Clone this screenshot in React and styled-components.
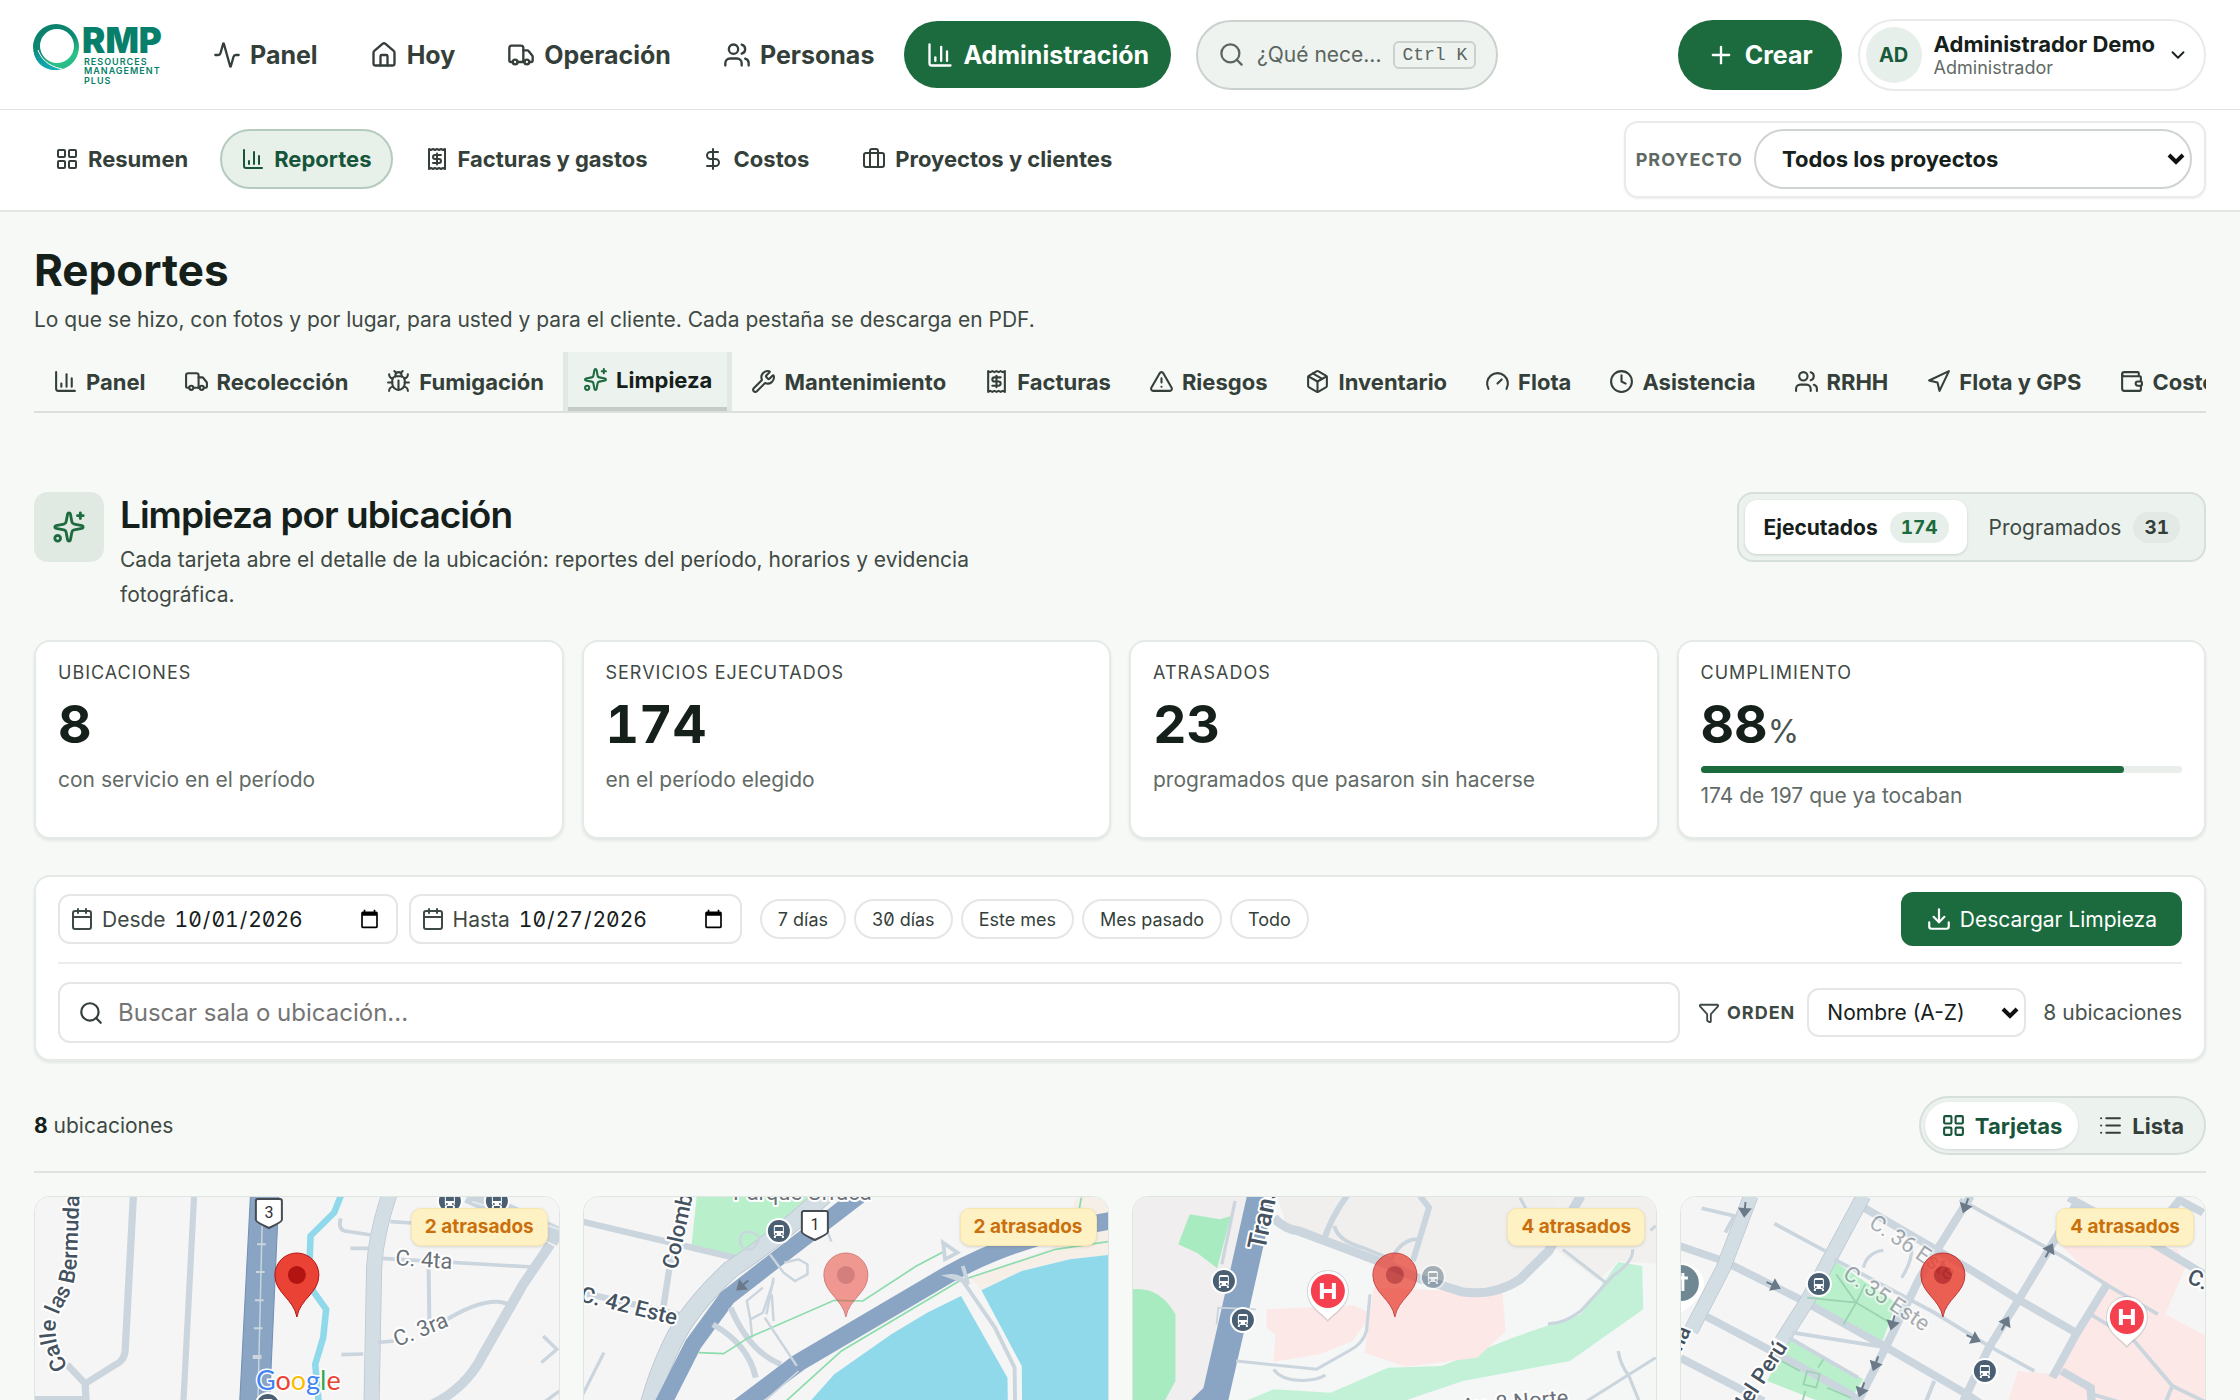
import React, { useState } from 'react';
import styled, { createGlobalStyle, css } from 'styled-components';
import {
  Activity, House, Truck, Users, ChartColumn, Search, Plus, ChevronDown, LayoutGrid,
  Receipt, DollarSign, Briefcase, Bug, Sparkles, Wrench, TriangleAlert, Package, Gauge,
  Clock, Navigation, Wallet, Calendar, Download, Funnel, List,
} from 'lucide-react';

const mainNav = [
  { label: 'Panel', icon: Activity },
  { label: 'Hoy', icon: House },
  { label: 'Operación', icon: Truck },
  { label: 'Personas', icon: Users },
  { label: 'Administración', icon: ChartColumn },
];

const subNav = [
  { label: 'Resumen', icon: LayoutGrid },
  { label: 'Reportes', icon: ChartColumn },
  { label: 'Facturas y gastos', icon: Receipt },
  { label: 'Costos', icon: DollarSign },
  { label: 'Proyectos y clientes', icon: Briefcase },
];

const reportTabs = [
  { label: 'Panel', icon: ChartColumn },
  { label: 'Recolección', icon: Truck },
  { label: 'Fumigación', icon: Bug },
  { label: 'Limpieza', icon: Sparkles },
  { label: 'Mantenimiento', icon: Wrench },
  { label: 'Facturas', icon: Receipt },
  { label: 'Riesgos', icon: TriangleAlert },
  { label: 'Inventario', icon: Package },
  { label: 'Flota', icon: Gauge },
  { label: 'Asistencia', icon: Clock },
  { label: 'RRHH', icon: Users },
  { label: 'Flota y GPS', icon: Navigation },
  { label: 'Costos', icon: Wallet },
];

const ranges = ['7 días', '30 días', 'Este mes', 'Mes pasado', 'Todo'];

/* ---------- logo ---------- */

const Logo = () => (
  <svg width="136" height="64" viewBox="0 0 136 64" role="img" aria-label="RMP Resources Management Plus">
    <defs>
      <linearGradient id="ring" x1="0.2" y1="0" x2="0.7" y2="1">
        <stop offset="0" stopColor="#0b7f6c" />
        <stop offset="0.5" stopColor="#0d8a72" />
        <stop offset="0.8" stopColor="#2cc287" />
        <stop offset="1" stopColor="#25b987" />
      </linearGradient>
      <linearGradient id="ringLow" x1="0" y1="0" x2="1" y2="1">
        <stop offset="0" stopColor="#0f8f8f" />
        <stop offset="1" stopColor="#14b4be" />
      </linearGradient>
    </defs>
    <path fill="url(#ring)" fillRule="evenodd" d="M24 1a23 23 0 1 1 0 46a23 23 0 1 1 0-46zM25 6a17 17 0 1 0 0 34a17 17 0 1 0 0-34z" />
    <path fill="url(#ringLow)" d="M5 28C8 35 15 43 29 46C17 50 4 42 2 30z" />
    <path d="M6 27C9 35 15 43 30 46" fill="none" stroke="#fff" strokeWidth="1" />
    <g fontFamily="Inter, sans-serif" fill="#087f6b">
      <text x="50" y="30" fontSize="35" fontWeight="900">RMP</text>
      <g fontSize="9" fontWeight="600" letterSpacing="1">
        <text x="52" y="42">RESOURCES</text>
        <text x="52" y="51">MANAGEMENT</text>
        <text x="52" y="61">PLUS</text>
      </g>
    </g>
  </svg>
);

/* ---------- map pieces ---------- */

const ROAD = '#cbd5de';
const BAND = '#d3dde4';
const HIGHWAY = '#8aa4c3';
const WATER = '#8fd9eb';
const PARK = '#b9f0cb';
const CARE = '#fce8e6';

const BusStop = ({ x, y, opacity = 1 }) => (
  <g transform={`translate(${x} ${y})`} opacity={opacity}>
    <circle r="13" fill="#fff" />
    <circle r="11" fill="#4a6072" />
    <rect x="-5" y="-6" width="10" height="11" rx="2" fill="#fff" />
    <rect x="-4" y="-4" width="8" height="4" fill="#4a6072" />
    <path d="M-4 5v2M4 5v2" stroke="#fff" strokeWidth="2" />
    <circle cx="-3" cy="3" r="1" fill="#4a6072" />
    <circle cx="3" cy="3" r="1" fill="#4a6072" />
  </g>
);

const Hospital = ({ x, y }) => (
  <g transform={`translate(${x} ${y})`}>
    <path d="M0 31C-4 25-21 17-21 0a21 21 0 0 1 42 0C21 17 4 25 0 31z" fill="#9aa5ad" opacity="0.4" />
    <path d="M0 29C-4 23-20 16-20 0a20 20 0 0 1 40 0C20 16 4 23 0 29z" fill="#fff" />
    <circle r="17" fill="#f5414f" />
    <path d="M-6-8v16M6-8v16M-6 0h12" stroke="#fff" strokeWidth="4" />
  </g>
);

const Pin = ({ opacity = 1 }) => (
  <g transform="translate(263 78)" opacity={opacity}>
    <path
      d="M0-22a22 22 0 0 1 22 22C22 18 3 24 0 42C-3 24-22 18-22 0A22 22 0 0 1 0-22z"
      fill="#ea4335" stroke="#b31412" strokeWidth="1"
    />
    <circle r="9" fill="#b31412" />
  </g>
);

const Shield = ({ x, y, children }) => (
  <g transform={`translate(${x} ${y})`}>
    <path d="M-13-12Q-13-14-11-14H11Q13-14 13-12V7Q13 9 0 15Q-13 9-13 7z" fill="#fff" stroke="#454b50" strokeWidth="2" />
    <text textAnchor="middle" y="5" fontSize="16" fontFamily="Roboto, sans-serif" fill="#2c3135">{children}</text>
  </g>
);

const Arrow = ({ x, y, turn }) => (
  <path d="M-7 0H4M0-5L7 0L0 5z" transform={`translate(${x} ${y}) rotate(${turn})`} fill="#6b7a88" stroke="#6b7a88" strokeWidth="2" />
);

const MapBermudas = () => (
  <MapSvg viewBox="0 0 526 300" preserveAspectRatio="xMidYMin slice" aria-hidden="true">
    <rect width="526" height="300" fill="#f5f5f5" />
    <g transform="scale(0.3635 0.3333) translate(-94 -48)" fill="none" stroke={ROAD}>
      <path d="M368 40L345 510Q342 540 320 550L235 608L185 550M235 605L242 760M95 655H240" strokeWidth="20" />
      <path d="M535 40L505 670L500 950" strokeWidth="17" />
      <path d="M690 40H768L742 670L730 950H648L660 670z" fill={HIGHWAY} stroke="#7391b8" strokeWidth="3" />
      <path d="M722 130L704 950" strokeWidth="4" />
      <path d="M708 190h24M705 273h24M702 358h24M699 442h24" strokeWidth="6" />
      <path d="M696 528h24" strokeWidth="12" />
      <path d="M940 40L920 95L855 165L853 230L862 330L898 385L890 470L868 550L878 670L890 950" stroke={WATER} strokeWidth="18" />
      <path d="M1072 40Q1035 160 1030 260L1018 950" stroke="#bac6cf" strokeWidth="44" />
      <path d="M1072 40Q1035 160 1030 260L1018 950" stroke={BAND} strokeWidth="40" />
      <path d="M938 112Q930 145 950 150L1022 162M965 202H1015M1075 122L1135 126M1050 232L1465 258M1180 260L1182 430M1040 484L1085 480M940 521L1000 519" strokeWidth="11" />
      <path d="M1220 422Q1310 360 1370 362Q1395 365 1402 372" strokeWidth="12" />
      <path d="M1290 40L1545 170" strokeWidth="54" />
      <path d="M1300 62L1540 145" stroke="#e3e8ec" strokeWidth="6" />
      <path d="M1515 190L1440 310L1330 520Q1280 630 1170 680" strokeWidth="28" />
      <path d="M1495 465L1533 505L1490 545M1500 662L1540 630" strokeWidth="10" />
    </g>
    <path id="bermudas" d="M34 170C20 146 18 130 27 112C37 96 42 84 43 62L47-40" fill="none" />
    <MapText>
      <textPath href="#bermudas">Calle las Bermudas</textPath>
    </MapText>
    <MapText soft x="361" y="68" transform="rotate(4 361 68)">C. 4ta</MapText>
    <MapText soft x="363" y="150" transform="rotate(-22 363 150)">C. 3ra</MapText>
    <BusStop x={416} y={4} />
    <BusStop x={463} y={4} />
    <Shield x={235} y={16}>3</Shield>
    <Pin />
    <BusStop x={234} y={208} />
    <GoogleMark x="222" y="193">
      <tspan fill="#4285f4">G</tspan>
      <tspan fill="#ea4335">o</tspan>
      <tspan fill="#fbbc05">o</tspan>
      <tspan fill="#4285f4">g</tspan>
      <tspan fill="#34a853">l</tspan>
      <tspan fill="#ea4335">e</tspan>
    </GoogleMark>
  </MapSvg>
);

const MapCosta = () => (
  <MapSvg viewBox="0 0 526 300" preserveAspectRatio="xMidYMin slice" aria-hidden="true">
    <rect width="526" height="300" fill="#f5f5f5" />
    <g transform="scale(0.3571 0.3333) translate(-36 -48)" fill="none" stroke={ROAD}>
      <path d="M355 45H670L480 225L340 195z" fill={PARK} stroke="none" />
      <path d="M1120 290L1360 195L1420 45H1520V220L1400 235L1265 270L1152 328z" fill="#f5efe8" stroke="none" />
      <path d="M665 670L740 580L900 460L1000 395L1095 345L1225 590L1230 950H500z" fill={WATER} stroke="none" />
      <path d="M1152 328L1265 270L1400 235L1520 220V950H1268L1265 555z" fill={WATER} stroke="none" />
      <path d="M36 122L480 235M36 335L320 405" strokeWidth="19" />
      <path d="M290 180L262 375" strokeWidth="18" />
      <path d="M95 515L36 640" strokeWidth="9" />
      <path d="M715 40Q560 190 450 265Q330 385 285 490Q240 590 215 700" stroke="#b5c1cb" strokeWidth="54" />
      <path d="M715 40Q560 190 450 265Q330 385 285 490Q240 590 215 700" stroke={BAND} strokeWidth="50" />
      <path d="M815 40L590 225L440 350L345 490L255 680" stroke={HIGHWAY} strokeWidth="48" />
      <path d="M400 430Q500 490 520 590M450 380Q500 510 590 550" strokeWidth="17" />
      <path d="M560 220L598 275L630 300L665 280L665 250L640 235L600 245M570 300L540 395L505 415L495 360L540 320M505 415L510 470M565 340L570 420M480 160Q510 140 530 170Q520 210 490 205Q470 190 480 160M720 150L732 182" strokeWidth="7" />
      <path d="M360 515L430 518L500 470L740 358L820 360L970 255L1050 210M600 665L760 510L1090 300L1360 205L1520 180M1432 50L1425 90" stroke="#8ddcae" strokeWidth="5" />
      <path d="M460 690L640 545L1060 280Q1250 165 1520 118" stroke={HIGHWAY} strokeWidth="52" />
      <path d="M545 410L635 555M570 290L550 400" strokeWidth="7" />
      <path d="M1045 185L1085 215L1050 235zM1100 255L1115 310Q1090 280 1060 285L1100 300L1190 440L1245 560L1250 950" strokeWidth="11" />
      <path d="M540 665L640 570" strokeWidth="5" />
    </g>
    <MapText x="94" y="73" transform="rotate(-78 94 73)">Colombia</MapText>
    <MapText x="-4" y="104" transform="rotate(14 -4 104)">C. 42 Este</MapText>
    <MapText soft x="150" y="3">Parque Urracá</MapText>
    <Arrow x={160} y={88} turn={140} />
    <BusStop x={196} y={34} />
    <Shield x={232} y={28}>1</Shield>
    <Pin opacity={0.52} />
  </MapSvg>
);

const MapTransistmica = () => (
  <MapSvg viewBox="0 0 526 300" preserveAspectRatio="xMidYMin slice" aria-hidden="true">
    <rect width="526" height="300" fill="#f5f6f6" />
    <g transform="scale(0.3571 0.3333) translate(-33 -48)" fill="none" stroke={ROAD}>
      <path d="M33 45H360L270 520L215 670L130 950H33z" fill="#f0eeee" stroke="none" />
      <path d="M440 45H1300L1200 205L1110 300L1000 335L820 280L600 190L470 150z" fill="#f0efee" stroke="none" />
      <path d="M1220 45H1520V250L1395 240L1340 300L1220 205z" fill="#f1f0ef" stroke="none" />
      <path d="M195 100L280 115L310 105L272 262L215 215L163 190zM33 325Q110 315 155 400V600L120 670L100 950H33z" fill="#a9ebc0" stroke="none" />
      <path d="M340 665L430 625L590 635L750 560L900 555L1100 470L1290 400L1395 243L1462 255L1465 385L1260 540L960 600L740 680L500 950z" fill="#c3f1d7" stroke="none" />
      <path d="M410 385L655 373L705 400L650 480L560 520L430 542L435 460L410 440zM710 320L1070 335L1080 450L1000 530L800 557L685 515z" fill={CARE} stroke="none" />
      <path d="M395 40L328 360L268 640L210 700" stroke={HIGHWAY} strokeWidth="76" />
      <path d="M322 60L285 250" strokeWidth="9" />
      <path d="M430 110Q460 145 500 150L600 190L760 255L830 290L960 333Q1050 345 1120 295L1200 210L1290 45" strokeWidth="27" />
      <path d="M635 45Q590 110 570 180M840 45L865 80L820 240" strokeWidth="17" />
      <path d="M600 135Q610 180 680 200L760 235Q790 170 840 175" strokeWidth="11" />
      <path d="M700 340L690 450Q680 490 640 510L550 565L325 540M430 565Q450 595 500 598Q550 600 575 582M1240 205L1360 305M1435 205Q1440 240 1380 285L1290 390Q1240 430 1198 428M1120 50L1140 90M1300 665L1500 530M1395 510Q1400 550 1425 585L1455 665M1485 148L1500 135" strokeWidth="9" />
      <path d="M270 430L275 380L380 385" strokeWidth="5" />
    </g>
    <MapText x="133" y="54" big transform="rotate(-78 133 54)">Transístmica</MapText>
    <MapText soft x="330" y="217" transform="rotate(-5 330 217)">Av. 8 Norte</MapText>
    <BusStop x={92} y={84} />
    <BusStop x={111} y={123} />
    <BusStop x={301} y={80} opacity={0.45} />
    <Hospital x={196} y={94} />
    <Pin opacity={0.74} />
  </MapSvg>
);

const MapPeru = () => (
  <MapSvg viewBox="0 0 526 300" preserveAspectRatio="xMidYMin slice" aria-hidden="true">
    <rect width="526" height="300" fill="#f5f5f5" />
    <g transform="scale(0.3635 0.3333) translate(-30 -48)" fill="none" stroke={ROAD}>
      <path d="M1080 195L1400 205L1420 260L1365 400L1540 500V950H850L960 570L1060 580L1200 320z" fill={CARE} stroke="none" />
      <path d="M455 240L625 365L585 490L380 365zM330 470L535 595L480 690L270 600z" fill={PARK} stroke="none" />
      <path d="M30 195L150 240L370 360L600 500L820 640L900 700M520 70L820 260L960 355L1120 455M100 405L300 520L500 640L560 700M30 530L260 660M1080 570L1160 620L1165 700M1100 50L1320 180L1480 285M1400 55L1470 95" strokeWidth="23" />
      <path d="M225 45L150 260L60 450M535 45L380 360L310 480" stroke="#bac6cf" strokeWidth="42" />
      <path d="M225 45L150 260L60 450M535 45L380 360L310 480" stroke={BAND} strokeWidth="38" />
      <path d="M830 45L690 290L600 490L530 640L500 700M1120 70L960 360L880 500L810 660M1205 310L1120 460L1055 590M1410 50L1380 90" strokeWidth="23" />
      <path d="M455 235L730 395L880 495L1005 570M800 55L1080 225L1210 315L1345 400M340 455L600 500M1160 400L1280 480L1385 615L1480 665M1385 615L1360 680M290 128L430 210M90 82L180 105L155 155M730 600L700 680M330 470L520 590M1165 640L1260 670" strokeWidth="11" />
      <path d="M535 260Q545 215 590 208M668 195Q670 240 640 290" strokeWidth="9" />
      <path d="M380 350L515 365L600 420M460 280L515 365L540 310M515 365L480 430M310 540L360 570M425 535L410 560M380 570L415 580L405 620L370 610zM435 620L500 650M375 630L365 670" stroke="#9bd3b2" strokeWidth="5" />
    </g>
    <Arrow x={65} y={12} turn={95} />
    <Arrow x={286} y={8} turn={110} />
    <Arrow x={93} y={88} turn={25} />
    <Arrow x={213} y={125} turn={105} />
    <Arrow x={196} y={166} turn={110} />
    <Arrow x={182} y={192} turn={110} />
    <Arrow x={293} y={141} turn={25} />
    <Arrow x={325} y={127} turn={-62} />
    <Arrow x={369} y={54} turn={-62} />
    <MapText soft faint x="188" y="29" transform="rotate(34 188 29)">C. 36 Este</MapText>
    <MapText soft faint x="162" y="80" transform="rotate(34 162 80)">C. 35 Este</MapText>
    <MapText x="64" y="218" transform="rotate(-57 64 218)">del Perú</MapText>
    <MapText x="-38" y="239" transform="rotate(-65 -38 239)">Ecuatoriana</MapText>
    <MapText x="506" y="85" transform="rotate(24 506 85)">C. 37</MapText>
    <path d="M-2 121C2 112 24 104 24 86C24 74 12 66-2 66z" fill="#fff" />
    <circle cx="1" cy="86" r="18" fill="#6f8893" />
    <path d="M3 76v18M-2 81h10" stroke="#fff" strokeWidth="3" />
    <BusStop x={139} y={87} />
    <BusStop x={305} y={174} />
    <Hospital x={447} y={120} />
    <Pin opacity={0.84} />
  </MapSvg>
);

const locations = [
  { late: 2, map: MapBermudas },
  { late: 2, map: MapCosta },
  { late: 4, map: MapTransistmica },
  { late: 4, map: MapPeru },
];

/* ---------- page ---------- */

const SelectArrow = () => (
  <svg width="18" height="12" viewBox="0 0 18 12" aria-hidden="true">
    <path d="M2 2l7 7 7-7" fill="none" stroke="#111" strokeWidth="4" />
  </svg>
);

const TopBar = () => (
  <Header>
    <LogoLink href="#"><Logo /></LogoLink>
    <MainNav aria-label="Principal">
      {mainNav.map(({ label, icon: Icon }) => (
        <MainLink key={label} href="#" $active={label === 'Administración'}>
          <Icon size={28} strokeWidth={2} />
          {label}
        </MainLink>
      ))}
    </MainNav>
    <QuickSearch type="button">
      <Search size={27} />
      <span>¿Qué nece...</span>
      <kbd>Ctrl K</kbd>
    </QuickSearch>
    <Spacer />
    <CreateButton type="button"><Plus size={28} />Crear</CreateButton>
    <Profile type="button">
      <Avatar>AD</Avatar>
      <ProfileText>
        <strong>Administrador Demo</strong>
        <small>Administrador</small>
      </ProfileText>
      <ChevronDown size={22} />
    </Profile>
  </Header>
);

const SubBar = () => (
  <SubHeader>
    <SubNav aria-label="Administración">
      {subNav.map(({ label, icon: Icon }) => (
        <SubLink key={label} href="#" $active={label === 'Reportes'}>
          <Icon size={24} />
          {label}
        </SubLink>
      ))}
    </SubNav>
    <ProjectBox>
      <label htmlFor="project">PROYECTO</label>
      <SelectWrap>
        <ProjectSelect id="project">
          <option>Todos los proyectos</option>
        </ProjectSelect>
        <SelectArrow />
      </SelectWrap>
    </ProjectBox>
  </SubHeader>
);

export default function App() {
  const [tab, setTab] = useState('Limpieza');
  const [mode, setMode] = useState('done');
  const [view, setView] = useState('cards');
  const [from, setFrom] = useState('2026-10-01');
  const [to, setTo] = useState('2026-10-27');

  return (
    <Shell>
      <GlobalStyle />
      <TopBar />
      <SubBar />
      <Main>
        <PageTitle>Reportes</PageTitle>
        <PageLead>
          Lo que se hizo, con fotos y por lugar, para usted y para el cliente. Cada pestaña se descarga en PDF.
        </PageLead>
        <Tabs role="tablist">
          {reportTabs.map(({ label, icon: Icon }, i) => (
            <Tab
              key={label + i}
              type="button"
              role="tab"
              aria-selected={tab === label}
              $active={tab === label}
              onClick={() => setTab(label)}
            >
              <Icon size={25} />
              {label}
            </Tab>
          ))}
        </Tabs>

        <SectionHead>
          <SectionIcon><Sparkles size={34} /></SectionIcon>
          <SectionText>
            <h2>Limpieza por ubicación</h2>
            <p>Cada tarjeta abre el detalle de la ubicación: reportes del período, horarios y evidencia fotográfica.</p>
          </SectionText>
          <Segment>
            <SegmentButton type="button" $active={mode === 'done'} onClick={() => setMode('done')}>
              Ejecutados<Count $active={mode === 'done'}>174</Count>
            </SegmentButton>
            <SegmentButton type="button" $active={mode === 'planned'} onClick={() => setMode('planned')}>
              Programados<Count $active={mode === 'planned'}>31</Count>
            </SegmentButton>
          </Segment>
        </SectionHead>

        <Stats>
          <Stat>
            <StatLabel>UBICACIONES</StatLabel>
            <StatValue>8</StatValue>
            <StatNote>con servicio en el período</StatNote>
          </Stat>
          <Stat>
            <StatLabel>SERVICIOS EJECUTADOS</StatLabel>
            <StatValue>174</StatValue>
            <StatNote>en el período elegido</StatNote>
          </Stat>
          <Stat>
            <StatLabel>ATRASADOS</StatLabel>
            <StatValue>23</StatValue>
            <StatNote>programados que pasaron sin hacerse</StatNote>
          </Stat>
          <Stat>
            <StatLabel>CUMPLIMIENTO</StatLabel>
            <StatValue>88<small>%</small></StatValue>
            <Track><Fill style={{ width: `${Math.round((174 / 197) * 100)}%` }} /></Track>
            <StatNote>174 de 197 que ya tocaban</StatNote>
          </Stat>
        </Stats>

        <Filters>
          <FilterRow>
            <DateBox>
              <Calendar size={24} />
              Desde
              <input type="date" value={from} onChange={(e) => setFrom(e.target.value)} />
            </DateBox>
            <DateBox>
              <Calendar size={24} />
              Hasta
              <input type="date" value={to} onChange={(e) => setTo(e.target.value)} />
            </DateBox>
            <Chips>
              {ranges.map((r) => <Chip key={r} type="button">{r}</Chip>)}
            </Chips>
            <Spacer />
            <DownloadButton type="button"><Download size={26} />Descargar Limpieza</DownloadButton>
          </FilterRow>
          <FilterRow $ruled>
            <SearchBox>
              <Search size={26} />
              <input type="search" aria-label="Buscar sala o ubicación" placeholder="Buscar sala o ubicación..." />
            </SearchBox>
            <OrderLabel htmlFor="order"><Funnel size={22} />ORDEN</OrderLabel>
            <SelectWrap>
              <OrderSelect id="order">
                <option>Nombre (A-Z)</option>
              </OrderSelect>
              <SelectArrow />
            </SelectWrap>
            <Total>8 ubicaciones</Total>
          </FilterRow>
        </Filters>

        <ListHead>
          <p><b>8</b> ubicaciones</p>
          <ViewToggle>
            <ViewButton type="button" $active={view === 'cards'} onClick={() => setView('cards')}>
              <LayoutGrid size={25} />Tarjetas
            </ViewButton>
            <ViewButton type="button" $active={view === 'list'} onClick={() => setView('list')}>
              <List size={25} />Lista
            </ViewButton>
          </ViewToggle>
        </ListHead>

        <Cards>
          {locations.map(({ late, map: Map }, i) => (
            <Card key={i} href="#">
              <Map />
              <LateBadge>{late} atrasados</LateBadge>
            </Card>
          ))}
        </Cards>
      </Main>
    </Shell>
  );
}

const GlobalStyle = createGlobalStyle`
  * {
    box-sizing: border-box;
  }
  body {
    margin: 0;
    background: #f6f9f6;
    color: #16201b;
    font-family: Inter, "Noto Sans", sans-serif;
    font-variant-numeric: slashed-zero;
  }
  button, input, select {
    font-family: inherit;
    font-variant-numeric: inherit;
  }
  h1, h2, p {
    margin: 0;
  }
  a {
    color: inherit;
    text-decoration: none;
  }
  svg {
    flex-shrink: 0;
  }
`;
const Shell = styled.div`
  height: 100vh;
  overflow: hidden;
`;
const Spacer = styled.div`
  flex: 1;
`;
const Header = styled.header`
  display: flex;
  align-items: center;
  height: 110px;
  padding: 0 34px 0 32px;
  background: #fefffe;
  border-bottom: 1px solid #e1e5e2;
`;
const LogoLink = styled.a`
  display: flex;
  margin-right: 23px;
`;
const MainNav = styled.nav`
  display: flex;
  gap: 8px;
`;
const MainLink = styled.a`
  display: flex;
  align-items: center;
  gap: 9px;
  height: 67px;
  padding: 0 22px;
  border-radius: 34px;
  font-size: 25px;
  font-weight: 650;
  color: #353f3a;
  ${(props) => props.$active && css`
    background: #1c6b3e;
    color: #fff;
    font-weight: 700;
  `}
`;
const QuickSearch = styled.button`
  display: flex;
  align-items: center;
  gap: 12px;
  height: 70px;
  width: 302px;
  margin-left: 25px;
  padding: 0 20px;
  border: 2px solid #cbd2ce;
  border-radius: 35px;
  background: #eef3ef;
  color: #5b655f;
  font-size: 21px;
  span {
    flex: 1;
    text-align: left;
    white-space: nowrap;
  }
  kbd {
    padding: 1px 7px;
    border: 2px solid #cbd2ce;
    border-radius: 6px;
    font-family: "Liberation Mono", monospace;
    font-size: 18px;
    line-height: 22px;
    white-space: nowrap;
  }
`;
const CreateButton = styled.button`
  display: flex;
  align-items: center;
  gap: 10px;
  height: 70px;
  padding: 0 29px;
  border: 0;
  border-radius: 35px;
  background: #1c6b3e;
  color: #fff;
  font-size: 25px;
  font-weight: 700;
`;
const Profile = styled.button`
  display: flex;
  align-items: center;
  gap: 12px;
  height: 72px;
  margin-left: 16px;
  padding: 0 15px 0 6px;
  border: 2px solid #e8ebe9;
  border-radius: 36px;
  background: #fff;
  color: #16201b;
`;
const Avatar = styled.span`
  display: grid;
  place-items: center;
  width: 56px;
  height: 56px;
  border-radius: 50%;
  background: #e6efe9;
  color: #17593a;
  font-size: 20px;
  font-weight: 700;
`;
const ProfileText = styled.span`
  display: flex;
  flex-direction: column;
  text-align: left;
  strong {
    font-size: 22px;
    line-height: 26px;
    font-weight: 700;
  }
  small {
    font-size: 18px;
    line-height: 22px;
    color: #626b66;
  }
`;
const SubHeader = styled.div`
  display: flex;
  align-items: center;
  justify-content: space-between;
  height: 102px;
  padding: 0 34px 2px;
  background: #fefffe;
  border-bottom: 2px solid #e3e8e4;
`;
const SubNav = styled.nav`
  display: flex;
  gap: 11px;
`;
const SubLink = styled.a`
  display: flex;
  align-items: center;
  gap: 9px;
  height: 60px;
  padding: 0 19px;
  border: 2px solid transparent;
  border-radius: 30px;
  font-size: 22px;
  font-weight: 650;
  color: #353f3a;
  ${(props) => props.$active && css`
    background: #e8f0ea;
    border-color: #b5cbbf;
    color: #17553a;
  `}
`;
const ProjectBox = styled.div`
  display: flex;
  align-items: center;
  gap: 11px;
  height: 77px;
  padding: 0 12px 0 10px;
  border: 2px solid #e8ebe9;
  border-radius: 14px;
  box-shadow: 0 1px 2px rgba(20, 40, 30, 0.08);
  label {
    font-size: 18px;
    font-weight: 700;
    letter-spacing: 1px;
    color: #5f6964;
  }
`;
const SelectWrap = styled.div`
  position: relative;
  display: flex;
  align-items: center;
  select {
    appearance: none;
  }
  svg {
    position: absolute;
    right: 7px;
    pointer-events: none;
  }
`;
const ProjectSelect = styled.select`
  width: 438px;
  height: 60px;
  padding: 0 26px;
  border: 2px solid #cfd4d1;
  border-radius: 30px;
  background-color: #fff;
  color: #16201b;
  font-size: 22px;
  font-weight: 650;
`;
const Main = styled.main`
  padding: 32px 34px 0;
`;
const PageTitle = styled.h1`
  font-size: 44px;
  line-height: 52px;
  font-weight: 700;
`;
const PageLead = styled.p`
  margin-top: 8px;
  font-size: 21px;
  line-height: 32px;
  color: #3f4944;
`;
const Tabs = styled.div`
  display: flex;
  height: 61px;
  margin-top: 16px;
  overflow: hidden;
  border-bottom: 2px solid #dbe0dc;
`;
const Tab = styled.button`
  display: flex;
  flex-shrink: 0;
  align-items: center;
  gap: 8px;
  padding: 0 19px;
  border: 0;
  background: none;
  font-size: 22px;
  font-weight: 650;
  color: #353f3a;
  ${(props) => props.$active && css`
    padding: 0 15px 4px;
    border: solid #e2e8e4;
    border-width: 0 5px;
    background: #ecf2ee;
    box-shadow: inset 0 -4px #c3ccc6;
    color: #16201b;
    svg {
      color: #1c6b3e;
    }
  `}
`;
const SectionHead = styled.section`
  display: flex;
  align-items: flex-start;
  margin-top: 79px;
`;
const SectionIcon = styled.div`
  display: grid;
  place-items: center;
  width: 70px;
  height: 70px;
  margin-right: 16px;
  border-radius: 14px;
  background: #e0eae3;
  color: #1c6b3e;
`;
const SectionText = styled.div`
  flex: 1;
  h2 {
    font-size: 37px;
    line-height: 46px;
    font-weight: 600;
    letter-spacing: -1px;
  }
  p {
    max-width: 900px;
    margin-top: 4px;
    font-size: 21px;
    line-height: 35px;
    color: #3f4944;
  }
`;
const Segment = styled.div`
  display: flex;
  gap: 4px;
  height: 70px;
  padding: 6px;
  border: 2px solid #d7dfda;
  border-radius: 16px;
  background: #ecf2ee;
`;
const SegmentButton = styled.button`
  display: flex;
  align-items: center;
  gap: 12px;
  padding: 0 18px;
  border: 0;
  border-radius: 12px;
  background: none;
  color: #3f4944;
  font-size: 21px;
  ${(props) => props.$active && css`
    background: #fff;
    box-shadow: 0 1px 3px rgba(20, 40, 30, 0.16);
    color: #16201b;
    font-weight: 700;
  `}
`;
const Count = styled.span`
  padding: 0 11px;
  border-radius: 16px;
  background: ${(props) => (props.$active ? '#e6efe9' : '#e3e9e5')};
  color: ${(props) => (props.$active ? '#1c6b3e' : '#353f3a')};
  font-size: 19px;
  line-height: 31px;
  font-weight: 700;
  font-variant-numeric: tabular-nums slashed-zero;
`;
const Stats = styled.section`
  display: grid;
  grid-template-columns: repeat(4, 1fr);
  gap: 18px;
  margin-top: 28px;
`;
const panel = css`
  border: 2px solid #e6eae7;
  border-radius: 16px;
  background: #fff;
  box-shadow: 0 2px 3px rgba(20, 40, 30, 0.08);
`;
const Stat = styled.div`
  ${panel}
  min-height: 199px;
  padding: 19px 22px;
`;
const StatLabel = styled.div`
  font-size: 18px;
  line-height: 24px;
  letter-spacing: 1px;
  color: #3f4944;
`;
const StatValue = styled.div`
  margin-top: 8px;
  font-size: 52px;
  line-height: 64px;
  font-weight: 750;
  font-variant-numeric: tabular-nums;
  small {
    font-size: 32px;
    line-height: 1;
    font-weight: 400;
    font-variant-numeric: normal;
    color: #4a544f;
  }
`;
const StatNote = styled.div`
  margin-top: 8px;
  font-size: 21px;
  line-height: 30px;
  color: #626b66;
`;
const Track = styled.div`
  height: 7px;
  margin-top: 9px;
  border-radius: 4px;
  background: #e9eeeb;
`;
const Fill = styled.div`
  height: 7px;
  border-radius: 4px;
  background: #1c6b3e;
`;
const Filters = styled.section`
  ${panel}
  margin-top: 36px;
  padding: 15px 22px 16px;
`;
const FilterRow = styled.div`
  display: flex;
  align-items: center;
  ${(props) => props.$ruled && css`
    margin-top: 16px;
    padding-top: 18px;
    border-top: 2px solid #eceeed;
  `}
`;
const field = css`
  border: 2px solid #e4e7e5;
  border-radius: 12px;
  background: #fff;
`;
const DateBox = styled.label`
  ${field}
  display: flex;
  align-items: center;
  gap: 8px;
  height: 50px;
  margin-right: 11px;
  padding: 0 14px 0 10px;
  font-size: 21px;
  color: #3f4944;
  input {
    width: 208px;
    padding: 0;
    border: 0;
    outline: 0;
    background: none;
    font-size: 21px;
    font-variant-numeric: tabular-nums slashed-zero;
    color: #16201b;
  }
`;
const Chips = styled.div`
  display: flex;
  gap: 8px;
  margin-left: 7px;
`;
const Chip = styled.button`
  height: 40px;
  padding: 0 16px;
  border: 2px solid #e4e7e5;
  border-radius: 20px;
  background: #fff;
  color: #353f3a;
  font-size: 18px;
`;
const DownloadButton = styled.button`
  display: flex;
  align-items: center;
  gap: 8px;
  height: 54px;
  padding: 0 25px;
  border: 0;
  border-radius: 12px;
  background: #1c6b3e;
  color: #fff;
  font-size: 21px;
`;
const SearchBox = styled.div`
  ${field}
  display: flex;
  flex: 1;
  align-items: center;
  gap: 14px;
  height: 61px;
  padding: 0 18px;
  color: #353f3a;
  input {
    flex: 1;
    border: 0;
    padding: 0;
    outline: 0;
    background: none;
    font-size: 24px;
    color: #16201b;
  }
  input::placeholder {
    color: #757575;
  }
`;
const OrderLabel = styled.label`
  display: flex;
  align-items: center;
  gap: 7px;
  margin: 0 12px 0 18px;
  color: #3f4944;
  font-size: 18px;
  font-weight: 700;
  letter-spacing: 1px;
`;
const OrderSelect = styled.select`
  ${field}
  width: 219px;
  height: 49px;
  padding: 0 18px;
  color: #16201b;
  font-size: 21px;
`;
const Total = styled.span`
  margin-left: 17px;
  font-size: 21px;
  color: #4a544f;
`;
const ListHead = styled.div`
  display: flex;
  align-items: center;
  justify-content: space-between;
  margin-top: 35px;
  padding-bottom: 16px;
  border-bottom: 2px solid #dfe4e0;
  font-size: 21px;
  color: #3f4944;
  b {
    color: #16201b;
  }
`;
const ViewToggle = styled.div`
  display: flex;
  gap: 4px;
  height: 59px;
  padding: 4px;
  border: 2px solid #d7dfda;
  border-radius: 30px;
  background: #ecf2ee;
`;
const ViewButton = styled.button`
  display: flex;
  align-items: center;
  gap: 9px;
  padding: 0 16px;
  border: 0;
  border-radius: 25px;
  background: none;
  color: #353f3a;
  font-size: 22px;
  font-weight: 650;
  ${(props) => props.$active && css`
    background: #fff;
    box-shadow: 0 1px 3px rgba(20, 40, 30, 0.12);
    color: #17553a;
  `}
`;
const Cards = styled.section`
  display: grid;
  grid-template-columns: repeat(4, 1fr);
  gap: 23px;
  margin-top: 23px;
`;
const Card = styled.a`
  position: relative;
  display: block;
  overflow: hidden;
  border: 1px solid #dfe5e1;
  border-radius: 16px;
  background: #fff;
`;
const LateBadge = styled.span`
  position: absolute;
  top: 11px;
  right: 11px;
  padding: 0 13px;
  border: 1px solid #f7e6b0;
  border-radius: 10px;
  background: #fef1c4;
  box-shadow: 0 1px 3px rgba(60, 50, 10, 0.16);
  color: #c9700c;
  font-size: 19px;
  line-height: 36px;
  font-weight: 700;
`;
const MapSvg = styled.svg`
  display: block;
  width: 100%;
  height: 300px;
`;
const MapText = styled.text.withConfig({
  shouldForwardProp: (prop) => !['soft', 'faint', 'big'].includes(prop),
})`
  font-family: Roboto, sans-serif;
  font-size: ${(props) => (props.big ? 26 : 22)}px;
  font-weight: ${(props) => (props.soft ? 400 : 500)};
  fill: ${(props) => (props.soft ? '#6b7278' : '#45525f')};
  opacity: ${(props) => (props.faint ? 0.55 : 1)};
  stroke: #fff;
  stroke-width: 4px;
  stroke-linejoin: round;
  paint-order: stroke;
`;
const GoogleMark = styled.text`
  font-family: Lato, sans-serif;
  font-size: 27px;
  stroke: #fff;
  stroke-width: 3px;
  paint-order: stroke;
`;
